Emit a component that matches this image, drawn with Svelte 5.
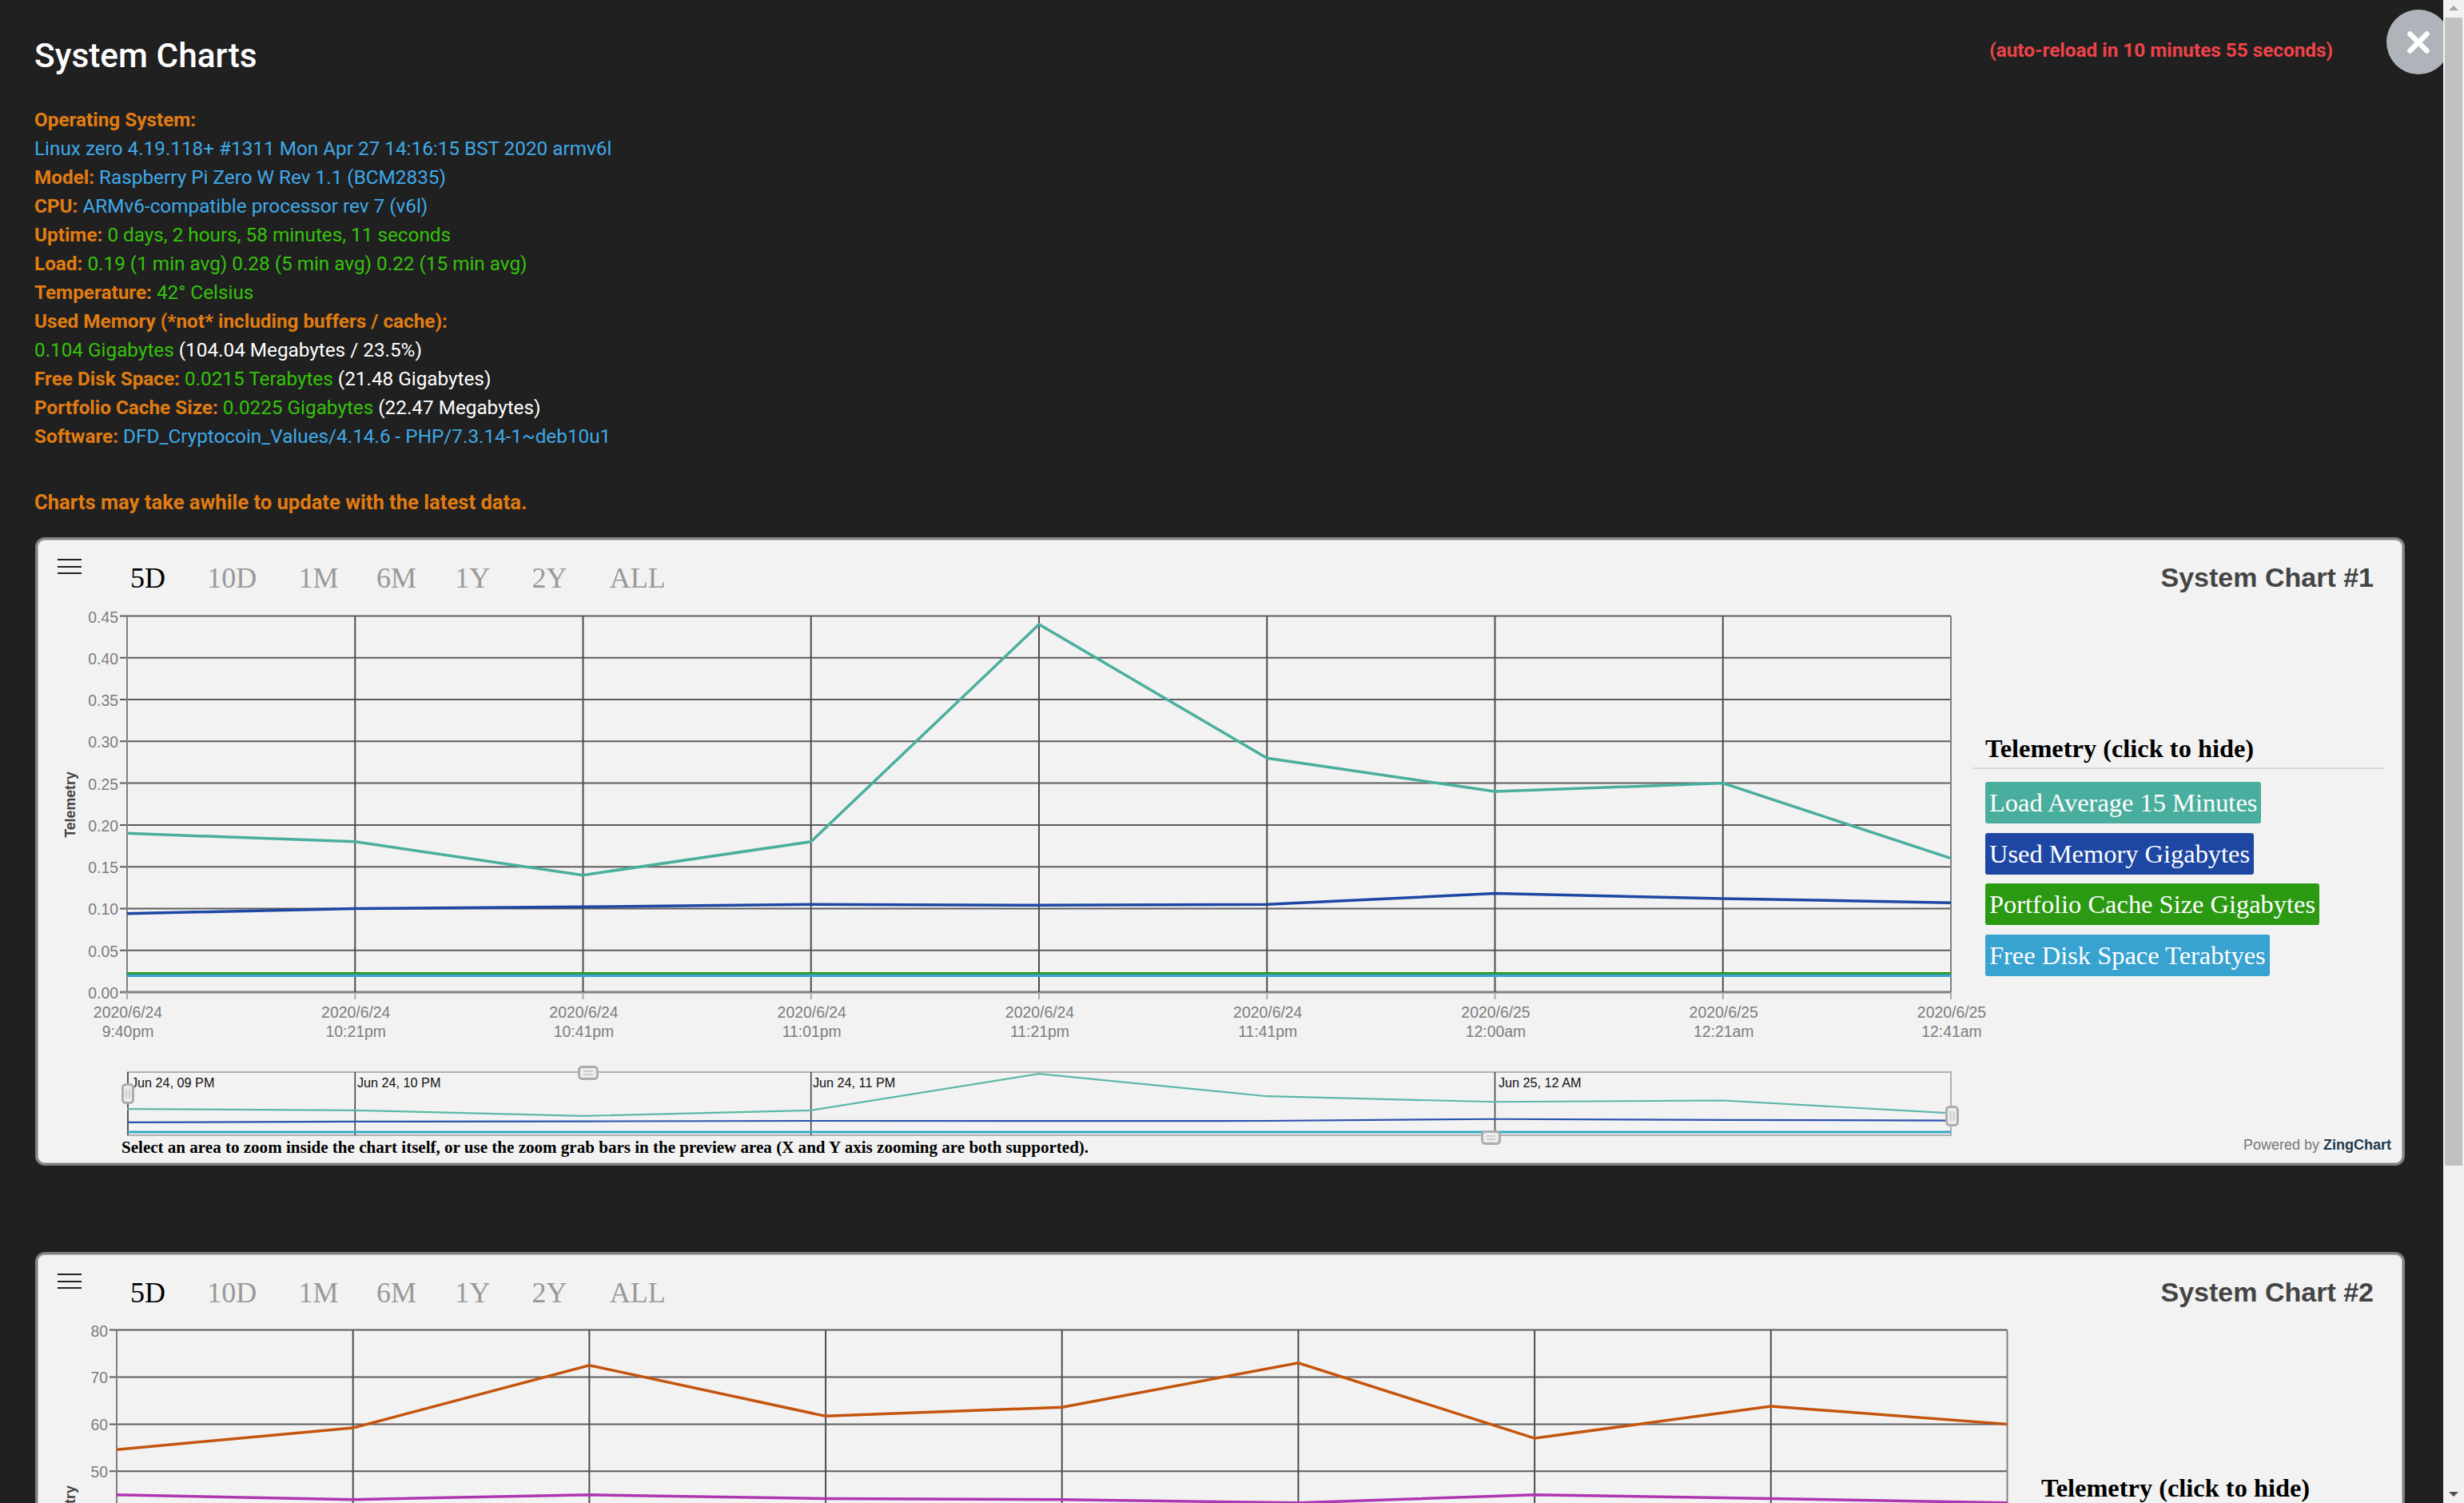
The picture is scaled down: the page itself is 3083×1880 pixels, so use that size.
<script>
	const ranges = ['5D', '10D', '1M', '6M', '1Y', '2Y', 'ALL'];
	const stamps = ['9:40pm', '10:21pm', '10:41pm', '11:01pm', '11:21pm', '11:41pm', '12:00am', '12:21am', '12:41am'];
	const days = ['24', '24', '24', '24', '24', '24', '25', '25', '25'];

	// everything inside a chart is in page coordinates, the svg viewBox does the offset
	const charts = [
		{
			title: 'System Chart #1',
			top: 672,
			x0: 159,
			x1: 2441,
			yTop: 770.5,
			yBottom: 1241,
			max: 0.45,
			ticks: ['0.00', '0.05', '0.10', '0.15', '0.20', '0.25', '0.30', '0.35', '0.40', '0.45'],
			legendX: 2468,
			legendTop: 157,
			series: [
				{ name: 'Load Average 15 Minutes', color: '#4aae9e', values: [0.19, 0.18, 0.14, 0.18, 0.44, 0.28, 0.24, 0.25, 0.16] },
				{ name: 'Used Memory Gigabytes', color: '#1e47a3', values: [0.094, 0.1, 0.102, 0.105, 0.104, 0.105, 0.118, 0.112, 0.107] },
				{ name: 'Portfolio Cache Size Gigabytes', color: '#2b9a12', values: [0.0222, 0.0222, 0.0222, 0.0222, 0.0222, 0.0222, 0.0222, 0.0222, 0.0222] },
				{ name: 'Free Disk Space Terabtyes', color: '#38a2d0', values: [0.0198, 0.0198, 0.0198, 0.0198, 0.0198, 0.0198, 0.0198, 0.0198, 0.0198] }
			],
			preview: true
		},
		{
			title: 'System Chart #2',
			top: 1566,
			x0: 146,
			x1: 2511.5,
			yTop: 1663.5,
			yBottom: 2135,
			max: 80,
			ticks: ['0', '10', '20', '30', '40', '50', '60', '70', '80'],
			legendX: 2538,
			legendTop: 188,
			series: [
				{ name: 'CPU Temperature Celsius', color: '#c4550e', values: [54.6, 59.2, 72.5, 61.7, 63.6, 73, 57, 63.8, 60] },
				{ name: 'Free Memory Percent', color: '#af36b1', values: [45, 44, 45, 44.2, 44, 43.3, 45, 44.2, 43.3] }
			],
			preview: false
		}
	];

	const previewLabels = [
		{ x: 164, line: 160, text: 'Jun 24, 09 PM' },
		{ x: 447, line: 444.25, text: 'Jun 24, 10 PM' },
		{ x: 1017, line: 1014.75, text: 'Jun 24, 11 PM' },
		{ x: 1875, line: 1870.5, text: 'Jun 25, 12 AM' }
	];

	const xAt = (c, i) => c.x0 + ((c.x1 - c.x0) / 8) * i;
	const yAt = (c, v) => c.yBottom - (v / c.max) * (c.yBottom - c.yTop);
	const linePoints = (c, s) => s.values.map((v, i) => `${xAt(c, i)},${yAt(c, v)}`).join(' ');
	const previewPoints = (c, s) => s.values.map((v, i) => `${xAt(c, i)},${1420.5 - 176 * v}`).join(' ');
</script>

<div class="page">
	<header class="top">
		<h1>System Charts</h1>
		<p class="reload">(auto-reload in 10 minutes 55 seconds)</p>
	</header>

	<div class="info">
		<div><b>Operating System:</b></div>
		<div class="blue">Linux zero 4.19.118+ #1311 Mon Apr 27 14:16:15 BST 2020 armv6l</div>
		<div><b>Model:</b> <span class="blue">Raspberry Pi Zero W Rev 1.1 (BCM2835)</span></div>
		<div><b>CPU:</b> <span class="blue">ARMv6-compatible processor rev 7 (v6l)</span></div>
		<div><b>Uptime:</b> <span class="green">0 days, 2 hours, 58 minutes, 11 seconds</span></div>
		<div><b>Load:</b> <span class="green">0.19 (1 min avg) 0.28 (5 min avg) 0.22 (15 min avg)</span></div>
		<div><b>Temperature:</b> <span class="green">42° Celsius</span></div>
		<div><b>Used Memory (*not* including buffers / cache):</b></div>
		<div><span class="green">0.104 Gigabytes</span> <span class="white">(104.04 Megabytes / 23.5%)</span></div>
		<div><b>Free Disk Space:</b> <span class="green">0.0215 Terabytes</span> <span class="white">(21.48 Gigabytes)</span></div>
		<div><b>Portfolio Cache Size:</b> <span class="green">0.0225 Gigabytes</span> <span class="white">(22.47 Megabytes)</span></div>
		<div><b>Software:</b> <span class="blue">DFD_Cryptocoin_Values/4.14.6 - PHP/7.3.14-1~deb10u1</span></div>
		<div class="notice"><b>Charts may take awhile to update with the latest data.</b></div>
	</div>

	{#each charts as chart}
		<section class="card">
			<div class="toolbar">
				<span class="burger"><i></i><i></i><i></i></span>
				<div class="ranges">
					{#each ranges as r, i}
						<span class:active={i === 0}>{r}</span>
					{/each}
				</div>
				<h2>{chart.title}</h2>
			</div>

			<div class="body">
				<svg
					class="plot"
					width={chart.legendX - 48}
					height="698"
					viewBox="48 {chart.top + 84} {chart.legendX - 48} 698"
				>
					{#each chart.ticks as t, i}
						{@const y = yAt(chart, (chart.max / (chart.ticks.length - 1)) * i)}
						<line
							x1={chart.x0 - 9}
							x2={chart.x1}
							y1={y}
							y2={y}
							stroke={i === 0 ? '#808080' : '#5c5c5c'}
							stroke-width={i === 0 ? 3 : 2}
						/>
						<text class="tick" x={chart.x0 - 11} y={y + 8} text-anchor="end">{t}</text>
					{/each}

					{#each stamps as stamp, i}
						{@const x = xAt(chart, i)}
						<line
							x1={x}
							x2={x}
							y1={chart.yTop}
							y2={chart.yBottom}
							stroke={i === 0 || i === 8 ? '#808080' : '#4d4d4d'}
							stroke-width="2"
						/>
						<line x1={x} x2={x} y1={chart.yBottom} y2={chart.yBottom + 9} stroke="#a8a8a8" stroke-width="2" />
						<text class="tick" x={x + 1} y={chart.yBottom + 32} text-anchor="middle">2020/6/{days[i]}</text>
						<text class="tick" x={x + 1} y={chart.yBottom + 56} text-anchor="middle">{stamp}</text>
					{/each}

					<text
						class="axis-title"
						transform="translate(94 {chart.yTop + 236}) rotate(-90)"
						text-anchor="middle">Telemetry</text
					>

					{#each chart.series as s}
						<polyline points={linePoints(chart, s)} fill="none" stroke={s.color} stroke-width="3.5" />
					{/each}

					{#if chart.preview}
						<rect x="160" y="1341" width="2281" height="79" fill="none" stroke="#b0b0b0" stroke-width="2" />
						{#each previewLabels as l}
							<line x1={l.line} x2={l.line} y1="1341" y2="1420" stroke="#444" stroke-width="1.6" />
							<text class="mini" x={l.x} y="1360">{l.text}</text>
						{/each}
						<polyline points={previewPoints(chart, chart.series[0])} fill="none" stroke="#5cb8a8" stroke-width="2.2" />
						<polyline points={previewPoints(chart, chart.series[1])} fill="none" stroke="#2a52ae" stroke-width="2.2" />
						<line x1="160" x2="2441" y1="1416" y2="1416" stroke="#37a9c6" stroke-width="3" />

						<!-- grab handles of the zoom preview -->
						<g class="handle">
							<rect x="153.5" y="1356.5" width="13" height="23" rx="4" />
							<path d="M158 1362v12M162 1362v12" />
							<rect x="2435.5" y="1384.5" width="14" height="23" rx="4" />
							<path d="M2440.5 1390v12M2444.5 1390v12" />
							<rect x="724.5" y="1334.5" width="23" height="15" rx="4" />
							<path d="M730 1340h12M730 1344h12" />
							<rect x="1854.5" y="1415.5" width="22" height="15" rx="4" />
							<path d="M1860 1421h11M1860 1425h11" />
						</g>
						<text class="note" x="152" y="1442"
							>Select an area to zoom inside the chart itself, or use the zoom grab bars in the preview area (X and Y axis zooming are both supported).</text
						>
					{/if}
				</svg>

				<aside class="legend" style="margin-top: {chart.legendTop}px">
					<h3>Telemetry (click to hide)</h3>
					<ul>
						{#each chart.series as s}
							<li style="background: {s.color}">{s.name}</li>
						{/each}
					</ul>
				</aside>
			</div>

			<div class="powered">Powered by <b>ZingChart</b></div>
		</section>
	{/each}
</div>

<button class="close" aria-label="Close">
	<svg width="28" height="28" viewBox="0 0 28 28">
		<path d="M3.5 3.5l21 21M24.5 3.5l-21 21" stroke="#fff" stroke-width="6.5" stroke-linecap="round" />
	</svg>
</button>

<div class="scrollbar">
	<span class="arrow up"></span>
	<span class="thumb"></span>
	<span class="arrow down"></span>
</div>

<style>
	:global(html),
	:global(body) {
		margin: 0;
		height: 1880px;
		overflow: hidden;
		background: #202020;
	}

	.page {
		width: 3057px;
		height: 1880px;
		overflow: hidden;
		box-sizing: border-box;
		font-family: Roboto, sans-serif;
		font-size: 24.3px;
		color: #fff;
	}

	.top {
		display: flex;
		justify-content: space-between;
		align-items: flex-start;
		height: 132px;
		padding: 0 138px 0 43px;
	}

	h1 {
		margin: 46px 0 0;
		font-size: 42.4px;
		line-height: 48px;
		font-weight: 500;
	}

	.reload {
		margin: 45px 0 0;
		line-height: 36px;
		font-weight: 700;
		color: #ef4348;
	}

	.info {
		margin-left: 43px;
		line-height: 36px;
		height: 540px;
	}

	.info div {
		height: 36px;
		white-space: nowrap;
	}

	.info .notice {
		margin-top: 46px;
		font-size: 25.6px;
	}

	b {
		font-weight: 700;
		color: #e07c12;
	}

	.blue {
		color: #3fa9e8;
	}

	.green {
		color: #35c20c;
	}

	.white {
		color: #fff;
	}

	.card {
		position: relative;
		box-sizing: border-box;
		width: 2965px;
		height: 786px;
		margin: 0 0 108px 44px;
		padding: 1px;
		border: 3px solid #808080;
		border-radius: 12px;
		background: #f2f2f2;
		box-shadow: inset 0 0 0 1px #bdbdbd;
		color: #000;
	}

	.toolbar {
		display: flex;
		align-items: flex-start;
		height: 80px;
		padding-right: 35px;
		box-sizing: border-box;
	}

	.burger {
		display: flex;
		flex-direction: column;
		gap: 6.5px;
		width: 30px;
		margin: 23px 0 0 24px;
	}

	.burger i {
		height: 2px;
		background: #222;
	}

	.ranges {
		display: flex;
		gap: 52.3px;
		margin: 27px 0 0 61px;
		font-family: 'Liberation Serif', serif;
		font-size: 36px;
		line-height: 40px;
		color: #999;
	}

	.ranges .active {
		color: #000;
	}

	.ranges span:nth-child(4) {
		margin-left: -5px;
	}

	.ranges span:nth-child(5) {
		margin-left: -4px;
	}

	.ranges span:nth-child(7) {
		margin-left: 1px;
	}

	h2 {
		margin: 26px 0 0 auto;
		font-family: 'Liberation Sans', sans-serif;
		font-size: 34px;
		line-height: 40px;
		font-weight: 700;
		color: #444;
	}

	.body {
		display: flex;
		align-items: flex-start;
	}

	.plot {
		flex: none;
		overflow: visible;
		font-family: 'Liberation Sans', sans-serif;
	}

	.tick {
		font-size: 19.4px;
		fill: #7d7d7d;
	}

	.axis-title {
		font-size: 17.8px;
		font-weight: 700;
		fill: #444;
	}

	.mini {
		font-size: 16.2px;
		fill: #111;
	}

	.note {
		font-family: 'Liberation Serif', serif;
		font-size: 21.05px;
		font-weight: 700;
		fill: #000;
	}

	.handle rect {
		fill: #ececec;
		stroke: #adadb0;
		stroke-width: 3;
	}

	.handle path {
		fill: none;
		stroke: #c4c4c6;
		stroke-width: 1.6;
	}

	.legend {
		width: 516px;
		font-family: 'Liberation Serif', serif;
	}

	h3 {
		margin: 0;
		padding: 0 16px 1px;
		border-bottom: 2px solid #d8d8d8;
		font-size: 32.4px;
		line-height: 46px;
		font-weight: 700;
	}

	ul {
		display: flex;
		flex-direction: column;
		align-items: flex-start;
		gap: 11.6px;
		margin: 0;
		padding: 16px;
		list-style: none;
	}

	li {
		height: 52px;
		padding: 0 5px;
		border-radius: 3px;
		font-size: 32.45px;
		line-height: 52px;
		color: #fff;
		white-space: nowrap;
	}

	.powered {
		position: absolute;
		right: 14px;
		bottom: 12px;
		font-family: 'Liberation Sans', sans-serif;
		font-size: 18px;
		color: #777;
	}

	.powered b {
		color: #1f3b4d;
	}

	.close {
		position: fixed;
		top: 12px;
		right: 17px;
		display: flex;
		align-items: center;
		justify-content: center;
		width: 80px;
		height: 81px;
		padding: 0;
		border: 0;
		border-radius: 50%;
		background: #aeb4b9;
	}

	.scrollbar {
		position: fixed;
		top: 0;
		right: 0;
		width: 26px;
		height: 1880px;
		background: #f1f1f1;
	}

	.thumb {
		position: absolute;
		top: 22px;
		left: 2px;
		width: 22px;
		height: 1436px;
		background: #c1c1c1;
	}

	.arrow {
		position: absolute;
		left: 7px;
		width: 0;
		height: 0;
		border-left: 6px solid transparent;
		border-right: 6px solid transparent;
	}

	.up {
		top: 7px;
		border-bottom: 6px solid #a3a3a3;
	}

	.down {
		bottom: 8px;
		border-top: 6px solid #505050;
	}
</style>
